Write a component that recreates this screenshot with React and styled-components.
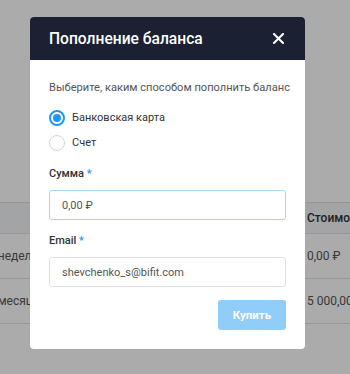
import React from "react";
import styled, { createGlobalStyle } from "styled-components";

const GlobalStyle = createGlobalStyle`
  html, body {
    margin: 0;
    padding: 0;
    background: #fff;
    font-family: Roboto, "Noto Sans", sans-serif;
    overflow: hidden;
  }
`;

const tariffs = [
  { name: "2 недели", price: "0,00 ₽" },
  { name: "1 месяц", price: "5 000,00 ₽" },
];

const App = () => {
  return (
    <>
      <GlobalStyle />
      <Page>
        <Table>
          <HeadCell />
          <HeadCell>Стоимость</HeadCell>
          {tariffs.map((t) => (
            <React.Fragment key={t.name}>
              <Cell>{t.name}</Cell>
              <Cell>{t.price}</Cell>
            </React.Fragment>
          ))}
        </Table>
      </Page>
      <Overlay>
        <Modal>
          <Header>
            <Title>Пополнение баланса</Title>
            <CloseButton aria-label="Закрыть">
              <svg width="11" height="11" viewBox="0 0 11 11">
                <path
                  d="M1 1L10 10M10 1L1 10"
                  stroke="#fff"
                  strokeWidth="2"
                  strokeLinecap="square"
                />
              </svg>
            </CloseButton>
          </Header>
          <Body>
            <Hint>Выберите, каким способом пополнить баланс</Hint>
            <RadioRow $first>
              <Radio $checked />
              Банковская карта
            </RadioRow>
            <RadioRow>
              <Radio />
              Счет
            </RadioRow>
            <Label>
              Сумма <Req>*</Req>
            </Label>
            <Input $focused>0,00 ₽</Input>
            <Label>
              Email <Req>*</Req>
            </Label>
            <Input>shevchenko_s@bifit.com</Input>
            <Footer>
              <BuyButton>Купить</BuyButton>
            </Footer>
          </Body>
        </Modal>
      </Overlay>
    </>
  );
};

const Page = styled.div`
  height: 374px;
  padding-top: 202px;
  box-sizing: border-box;
`;

const Table = styled.div`
  display: grid;
  grid-template-columns: 319px 120px;
  margin-left: -12px;
  width: 439px;
`;

const HeadCell = styled.div`
  height: 32px;
  display: flex;
  align-items: center;
  background: #f4f5f8;
  border-top: 1px solid #e0e3ea;
  border-bottom: 1px solid #e0e3ea;
  box-sizing: border-box;
  font-size: 12px;
  font-weight: 500;
  color: #333;
`;

const Cell = styled.div`
  height: 45px;
  display: flex;
  align-items: center;
  border-bottom: 1px solid #e0e3ea;
  box-sizing: border-box;
  font-size: 12px;
  color: #555;
`;

const Overlay = styled.div`
  position: fixed;
  inset: 0;
  background: rgba(0, 0, 0, 0.33);
  padding: 17px 0 0 30px;
`;

const Modal = styled.div`
  width: 275px;
  background: #fff;
  border-radius: 4px;
  overflow: hidden;
`;

const Header = styled.div`
  height: 43px;
  background: #1b2133;
  display: flex;
  align-items: center;
  justify-content: space-between;
  padding: 0 21px 0 19px;
`;

const Title = styled.div`
  color: #fff;
  font-size: 15.6px;
  font-weight: 500;
`;

const CloseButton = styled.button`
  border: none;
  background: none;
  padding: 0;
  display: flex;
  cursor: pointer;
`;

const Body = styled.div`
  padding: 20px 19px 19px;
  display: flex;
  flex-direction: column;
`;

const Hint = styled.div`
  font-size: 11.1px;
  line-height: 16px;
  color: #555;
  white-space: nowrap;
`;

const RadioRow = styled.label`
  display: flex;
  align-items: center;
  gap: 7px;
  margin-top: ${(p) => (p.$first ? "14px" : "9px")};
  font-size: 11px;
  line-height: 16px;
  color: #333;
`;

const Radio = styled.span`
  width: 16px;
  height: 16px;
  border-radius: 50%;
  box-sizing: border-box;
  border: ${(p) => (p.$checked ? "2px solid #2196f3" : "1.5px solid #cfd5e0")};
  display: flex;
  align-items: center;
  justify-content: center;
  &::after {
    content: "";
    display: ${(p) => (p.$checked ? "block" : "none")};
    width: 8px;
    height: 8px;
    border-radius: 50%;
    background: #2196f3;
  }
`;

const Label = styled.div`
  margin-top: 15px;
  font-size: 11px;
  line-height: 16px;
  font-weight: 500;
  color: #333;
  & + div {
    margin-top: 8px;
  }
`;

const Req = styled.span`
  color: #2196f3;
`;

const Input = styled.div`
  height: 30px;
  box-sizing: border-box;
  border: 1px solid ${(p) => (p.$focused ? "#a9d5fb" : "#dfe3ea")};
  border-radius: 3px;
  padding: 0 12px;
  display: flex;
  align-items: center;
  font-size: 11px;
  color: #555;
  & + div {
    margin-top: 13px;
  }
`;

const Footer = styled.div`
  display: flex;
  justify-content: flex-end;
`;

const BuyButton = styled.button`
  width: 68px;
  height: 30px;
  border: none;
  border-radius: 3px;
  background: #90cdf9;
  color: #fff;
  font-family: Roboto, sans-serif;
  font-size: 11.5px;
  font-weight: 700;
`;

export default App;
